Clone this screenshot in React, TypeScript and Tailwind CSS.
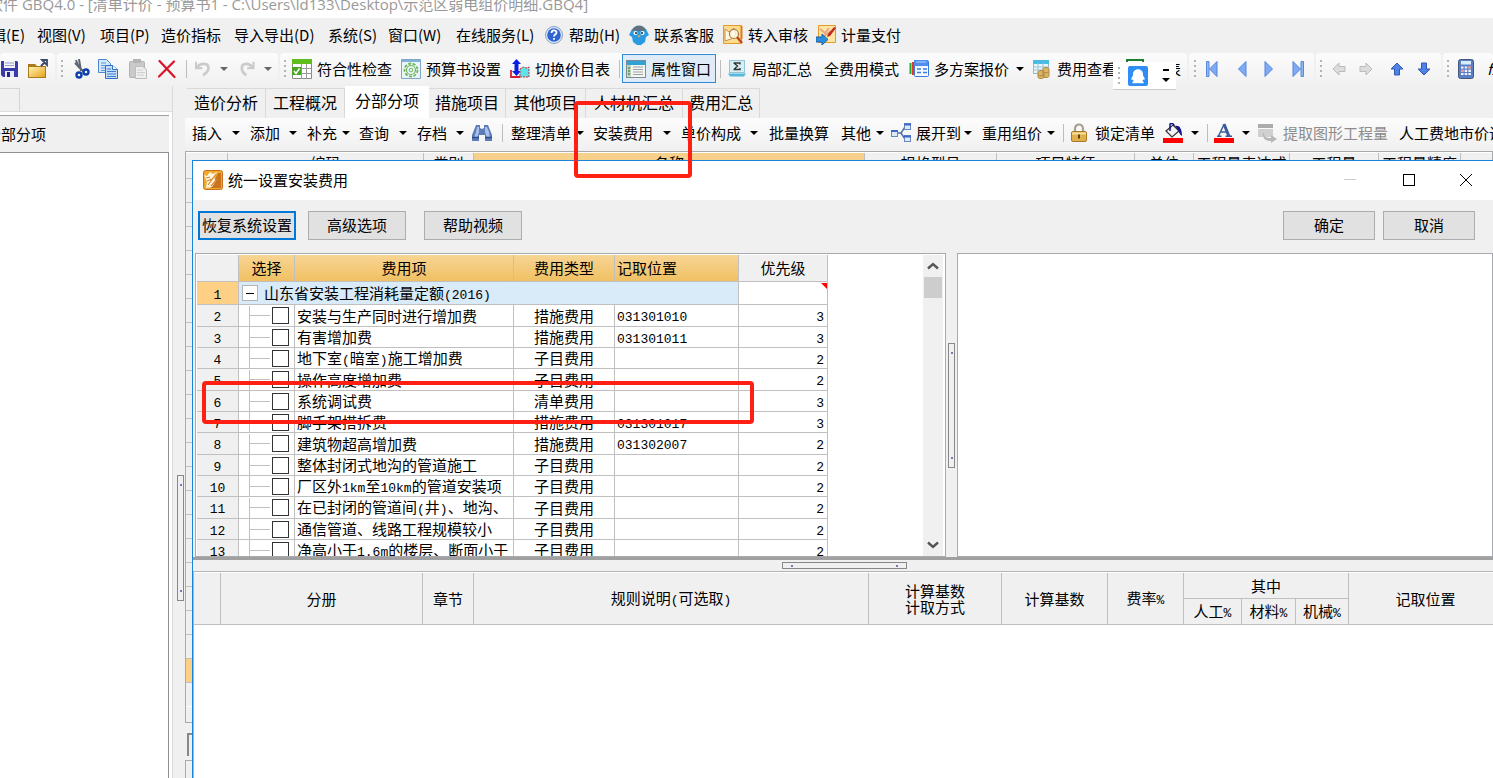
import React from 'react';
import type { ReactNode } from 'react';

/* ---------- text helpers ---------- */

function Mixed({ text }: { text: string }) {
  return (
    <>
      {text.split(/([\x20-\x7e]+)/).map((part, i) =>
        i % 2 === 1 ? (
          <span key={i} className="font-['Liberation_Mono',monospace] text-[13px] leading-none">
            {part}
          </span>
        ) : (
          part
        ),
      )}
    </>
  );
}

/* ---------- icons ---------- */

function Svg({ children, className = 'size-5' }: { children: ReactNode; className?: string }) {
  return (
    <svg viewBox="0 0 20 20" className={`shrink-0 ${className}`} fill="none" aria-hidden="true">
      {children}
    </svg>
  );
}

const SaveIcon = () => (
  <Svg>
    <path d="M1 2h16l1 1v15H3l-2-2z" fill="#3a3aa8" />
    <path d="M4 2h11v7H4z" fill="#f4f4fb" />
    <path d="M5 4h9M5 6.500h9" stroke="#9a9ac8" />
    <path d="M5 12h9v6H5z" fill="#e8e8f4" />
    <path d="M7 13h3v5H7z" fill="#25258a" />
  </Svg>
);
const FolderIcon = () => (
  <Svg>
    <path d="M0 5h7l2 2h9v12H0z" fill="#a87a1c" />
    <path d="M1 8h16v10H1z" fill="url(#folderFill)" />
    <path d="M13 7l4-4M14 1h5v5z" stroke="#3a4b66" strokeWidth="1.800" />
    <defs>
      <linearGradient id="folderFill" x1="0" y1="0" x2="1" y2="1">
        <stop stopColor="#fff1b0" />
        <stop offset="1" stopColor="#e9a320" />
      </linearGradient>
    </defs>
  </Svg>
);
const CutIcon = () => (
  <Svg>
    <path d="M2 4l9 9M6 0l2 12M3 1l3 8" stroke="#5d6672" strokeWidth="2" />
    <circle cx="6" cy="16" r="2.500" stroke="#0c3fae" strokeWidth="2.400" />
    <circle cx="13" cy="13" r="2.500" stroke="#0c3fae" strokeWidth="2.400" />
  </Svg>
);
const CopyIcon = () => (
  <Svg>
    <path d="M.500.500h8l4 4v9h-12z" fill="#d6e8fb" stroke="#4b86cf" />
    <path d="M3 4h5M3 6.500h7M3 9h7M3 11.500h5" stroke="#5d97dc" />
    <path d="M7.500 6.500h7l5 4v9h-12z" fill="#c5defa" stroke="#2f6fc4" />
    <path d="M14.500 6.500v4h5" fill="#fff" stroke="#2f6fc4" />
    <path d="M9 10h4M9 12.500h9M9 15h9M9 17.500h9" stroke="#3f7dd0" />
  </Svg>
);
const PasteIcon = () => (
  <Svg>
    <rect x="1.500" y="2.500" width="15" height="16" rx="1" fill="#c9c9c9" stroke="#b2b2b2" />
    <path d="M5 0h8v4H5z" fill="#b5b5b5" />
    <path d="M7.500 7.500h7l4 3v9h-11z" fill="#efefef" stroke="#bdbdbd" />
    <path d="M9 11h6M9 13.500h8M9 16h7" stroke="#cfcfcf" />
  </Svg>
);
const DeleteIcon = () => (
  <Svg>
    <path d="M1.500 2L16.500 18M16 2.500L1 17.500" stroke="#d8152b" strokeWidth="2.200" strokeLinecap="round" />
  </Svg>
);
const UndoIcon = () => (
  <Svg className="size-[18px]">
    <path d="M1 2v7h7" stroke="#cbcbcb" strokeWidth="2.400" />
    <path d="M2 8c4-5 13-5 13 1 0 4-3 6-6 8" stroke="#cbcbcb" strokeWidth="3" />
  </Svg>
);
const RedoIcon = () => (
  <Svg className="size-[18px]">
    <path d="M15 2v7H8" stroke="#cbcbcb" strokeWidth="2.400" />
    <path d="M14 8C10 3 2 3 2 9c0 4 2 6 5 8" stroke="#cbcbcb" strokeWidth="3" />
  </Svg>
);
const CheckTableIcon = () => (
  <Svg>
    <path d="M.500 4.500h19v15H.500z" fill="#fff" stroke="#888" />
    <path d="M0 0h20v5H0z" fill="#5fbe1c" />
    <path d="M1 9.500h19M1 14.500h19M9.500 5v15M14.500 5v15" stroke="#999" />
    <path d="M0 8h9v8H0z" fill="#4aa522" />
    <path d="M2 12l2 2.500L7.500 9.500" stroke="#fff" strokeWidth="1.500" />
  </Svg>
);
const GearIcon = () => (
  <Svg>
    <path d="M.500.500h19v19H.500z" fill="#eaf5fb" stroke="#7fa6c4" />
    <path d="M1 1h18v2H1z" fill="#7fb0de" />
    <circle cx="10" cy="11" r="6.500" stroke="#6fb657" strokeWidth="1.800" strokeDasharray="3 1.500" />
    <circle cx="10" cy="11" r="4.500" stroke="#6fb657" strokeWidth="1.200" />
    <circle cx="10" cy="11" r="1.800" stroke="#6fb657" />
  </Svg>
);
const SwitchIcon = () => (
  <Svg>
    <path d="M6.500 0L11 5H8.500v7H11l-4.500 5L2 12h2.500V5H2z" fill="#0a1ee0" />
    <path d="M1 11v7h9" stroke="#d3202e" strokeWidth="1.800" />
    <path d="M10 10l3-2 3 1 3-1v10h-9z" fill="#5fe2ea" stroke="#d3202e" strokeDasharray="2 1" />
  </Svg>
);
const PropsIcon = () => (
  <Svg>
    <rect x=".500" y="1.500" width="19" height="17" fill="#f7f7f2" stroke="#7f8b96" />
    <path d="M1 2h18v4H1z" fill="#2fa3d3" />
    <path d="M1 6h4v12H1z" fill="#c3d3c0" />
    <path d="M2 9h2M2 12h2M2 15h2" stroke="#3b9b3b" strokeWidth="1.500" />
    <path d="M7 8h10M7 10.500h10M7 13h10M7 15.500h10" stroke="#9aa0a5" />
  </Svg>
);
const SumIcon = () => (
  <Svg>
    <rect x="2.500" y="1.500" width="15" height="12" fill="#d8eef5" stroke="#93c5da" />
    <path d="M6.500 4h6.500v1.500M6.500 10.500h6.500V9M7 4l3.500 3L7 10.500" stroke="#333" strokeWidth="1.400" />
    <path d="M1 14.500h18l-2 3H3z" fill="#56b7d9" />
  </Svg>
);
const PlansIcon = () => (
  <Svg>
    <path d="M1.500 4v11" stroke="#1cae33" strokeWidth="2" />
    <path d="M4 3v13" stroke="#e33b28" strokeWidth="2" />
    <rect x="5.500" y="1.500" width="14" height="16" rx="1" fill="#f5f9ff" stroke="#3b78e0" />
    <path d="M5 1h14v6H5z" fill="#4f8df0" />
    <path d="M7 3h10" stroke="#b9d4fb" />
    <path d="M8 10h4M14 10h4M8 13.500h4M14 13.500h4" stroke="#3b78e0" strokeWidth="1.500" />
  </Svg>
);
const CoinsIcon = () => (
  <Svg>
    <rect x="1.500" y="1.500" width="15" height="13" fill="#e8f6fb" stroke="#8fbdd0" />
    <path d="M1 1h16v4H1z" fill="#45bde4" />
    <path d="M1 8h16M1 11h16M6 4v10M11 4v10" stroke="#9dc5d4" />
    <path d="M6 13c0-2 6-2 6 0v5c0 2-6 2-6 0zM11 10c0-2 6-2 6 0v7c0 2-6 2-6 0z" fill="#dcb467" stroke="#b08a42" />
    <path d="M11 13c2 1 4 1 6 0M6 16c2 1 4 1 6 0" stroke="#b08a42" />
  </Svg>
);
const HelpIcon = () => (
  <Svg>
    <circle cx="10" cy="10" r="8.500" fill="#dce9fb" stroke="#8aa0c2" />
    <circle cx="10" cy="10" r="6.800" fill="#2e63d0" />
    <path d="M7.500 8c0-3.500 5-3.500 5-.500 0 2-2.500 2-2.500 4M10 13v1.800" stroke="#fff" strokeWidth="1.800" />
  </Svg>
);
const SupportIcon = () => (
  <Svg>
    <path d="M3 4h14l3 6-3 2-1 5-4 3H8l-4-3-1-5-3-2z" fill="#2a9be0" />
    <path d="M3 5c2-6 12-6 14 0l-3 1H6z" fill="#5d7383" />
    <circle cx="6.500" cy="8" r="2" fill="#fff" />
    <circle cx="13.500" cy="8" r="2" fill="#fff" />
    <circle cx="7" cy="8" r="1" fill="#123" />
    <circle cx="13" cy="8" r="1" fill="#123" />
    <path d="M8 10.500h4l-2 2z" fill="#f2b13c" />
  </Svg>
);
const AuditIcon = () => (
  <Svg>
    <path d="M.500.500h18v18H.500z" fill="#fbdc8c" stroke="#e59a28" />
    <path d="M2 4l4 3 5-4 2 6-5 5-6 2z" fill="#fff6dc" stroke="#c98b53" />
    <circle cx="11" cy="9" r="4.500" fill="#fffbe8" fillOpacity=".8" stroke="#a47a4c" strokeWidth="1.200" />
    <path d="M14 12l5 6" stroke="#c5461c" strokeWidth="2.500" />
    <path d="M18.500 1v13" stroke="#e07a1c" strokeWidth="2" />
  </Svg>
);
const PayIcon = () => (
  <Svg>
    <path d="M2.500.500h17v17h-17z" fill="#fde6a4" stroke="#e59a28" />
    <path d="M4 4l5 4 4-5M8 11l7-5" stroke="#e8a884" strokeWidth="2" />
    <path d="M11 12l3-1 6-8-2-1-6 7z" fill="#c5281c" />
    <path d="M0 12h6V9l6 5.500L6 20v-3H0z" fill="#2a8fdc" stroke="#1d62aa" />
  </Svg>
);
const BinocularsIcon = () => (
  <Svg>
    <path d="M4 2h4v3l2 1 2-1V2h4l4 10v6h-7v-6H7v6H0v-6z" fill="#5c7dba" />
    <path d="M5 4h2v5l-2 6H2l2-6zM13 4h2l2 5 1 6h-3l-2-6z" fill="#a9c0e8" />
    <path d="M0 14.500h7M13 14.500h7" stroke="#2d4d88" strokeWidth="1.500" />
  </Svg>
);
const TreeIcon = () => (
  <Svg>
    <path d="M6 10h4l4-6M10 10l4 6" stroke="#4b6ea8" strokeWidth="1.500" />
    <rect x=".500" y="7.500" width="6" height="6" fill="#dfe9fa" stroke="#6888bd" />
    <rect x="13.500" y=".500" width="6" height="6" fill="#dfe9fa" stroke="#6888bd" />
    <rect x="13.500" y="12.500" width="6" height="6" fill="#dfe9fa" stroke="#6888bd" />
    <path d="M0 8h7M13 1.500h7M13 13.500h7" stroke="#3b68c4" strokeWidth="2" />
  </Svg>
);
const LockIcon = () => (
  <Svg>
    <path d="M5 9V6c0-6 8-6 8 0v3" stroke="#a7a08e" strokeWidth="2.200" />
    <rect x="1.500" y="8.500" width="15" height="10" rx="1.500" fill="#e2b04a" stroke="#a77a26" />
    <path d="M2 10.500h14" stroke="#f8df9c" strokeWidth="2" />
    <path d="M9 11.500v4" stroke="#5d4310" strokeWidth="2" />
  </Svg>
);
const FillIcon = () => (
  <Svg>
    <path d="M3 8l7-6 6 6-7 6z" fill="#f4f4f4" stroke="#333" strokeWidth="1.200" />
    <path d="M7 8V1c2-1.500 4 0 4 2" stroke="#14148a" strokeWidth="1.500" />
    <path d="M12 3c4-1 7 2 7 10-2-1-3-4-4-6z" fill="#14148a" />
    <path d="M0 15h20v5H0z" fill="#f00" />
  </Svg>
);
const FontColorIcon = () => (
  <Svg>
    <path d="M4.500 13L10 1.500M6 9h7M3 13.300h4.500M11.500 13.300H18" stroke="#3a5c9c" strokeWidth="1.500" />
    <path d="M10 1l5 12.500" stroke="#3a5c9c" strokeWidth="3" />
    <path d="M0 15h20v5H0z" fill="#f00" />
  </Svg>
);
const ExtractIcon = () => (
  <Svg>
    <path d="M0 1h15v4H0z" fill="#ababab" />
    <path d="M0 6h15v8H0z" fill="#d0d0d0" />
    <path d="M6 10c0 4 2 5 7 5v-3l6 4-6 4v-2c-6 0-8-2-8-8z" fill="#b8b8b8" />
  </Svg>
);
const CalcIcon = () => (
  <Svg>
    <rect x=".500" y=".500" width="15" height="19" rx="2" fill="#5a7fc6" stroke="#47577a" />
    <path d="M3 2h10v3.500H3z" fill="#d8ecfb" />
    <path d="M3 8.500h10M3 11.800h10M3 15h10" stroke="#f4f4ff" strokeWidth="2.200" strokeDasharray="2.500 1.200" />
    <path d="M10.500 8.500h2.500M3 11.800h2.500" stroke="#e88" strokeWidth="2" />
  </Svg>
);
const AppIcon = () => (
  <Svg>
    <rect x=".500" y=".500" width="19" height="19" rx="2" fill="#f0a92c" stroke="#c9701c" />
    <path d="M15 3h3v15H8z" fill="#c9741c" />
    <path d="M1 5l3 1 3-4 3 2 4-2-3 6 2 3-4 6-6 1 1-6z" fill="#fff6e2" />
    <path d="M3 8l4-1M4 11l5-2M5 15l8-11M8 16l6-7" stroke="#d8872c" strokeWidth="1.200" />
  </Svg>
);

function NavIcon({ flip = false, bar = false }: { flip?: boolean; bar?: boolean }) {
  return (
    <svg viewBox="0 0 12 18" className={`h-[18px] w-3 shrink-0 ${flip ? 'rotate-180' : ''}`} aria-hidden="true">
      {bar && <path d="M.500 1.500h2.500v15H.500z" fill="#8fb6f5" stroke="#5a89dc" />}
      <path d="M11 1.500v15L3.500 9z" fill="#7fabf5" stroke="#5583da" />
    </svg>
  );
}
function BlockArrow({ color, line, turn }: { color: string; line: string; turn: string }) {
  return (
    <svg viewBox="0 0 14 14" className={`size-3.5 shrink-0 ${turn}`} aria-hidden="true">
      <path d="M1 7l6-6v3.500h6v5H7V13z" fill={color} stroke={line} />
    </svg>
  );
}

/* ---------- tool bar parts ---------- */

const Grip = ({ w }: { w: string }) => (
  <span className={`flex shrink-0 flex-col gap-[3px] ${w}`}>
    {[0, 1, 2, 3].map((i) => (
      <i key={i} className="size-[2px] bg-[#b4b4b4]" />
    ))}
  </span>
);
const Sep = ({ w }: { w: string }) => (
  <span className={`flex h-[18px] shrink-0 ${w}`}>
    <i className="w-px bg-[#bcbcbc]" />
  </span>
);
const Caret = ({ color = 'border-t-black' }: { color?: string }) => (
  <i className={`size-0 shrink-0 border-x-4 border-t-4 border-x-transparent ${color}`} />
);

type ToolProps = { w: string; icon?: ReactNode; label?: string; tone?: string; title?: string };
function Tool({ w, icon, label, tone = 'text-black', title }: ToolProps) {
  return (
    <button
      type="button"
      aria-label={label ?? title}
      className={`flex shrink-0 items-center gap-[5px] text-left whitespace-nowrap ${tone} ${w}`}
    >
      {icon}
      {label}
    </button>
  );
}
function CaretTool({ w, title, color }: { w: string; title: string; color?: string }) {
  return (
    <button type="button" aria-label={title} className={`flex h-5 shrink-0 items-center ${w}`}>
      <Caret color={color} />
    </button>
  );
}

const barClass =
  'flex shrink-0 items-center overflow-hidden rounded-t bg-linear-to-b from-[#fcfcfc] to-[#f0f0f0] pb-[2px]';

function MenuBar() {
  return (
    <nav className="flex h-[35px] shrink-0 items-center overflow-hidden pb-[2px]">
      <Tool w="w-[61px] -ml-6" label="编辑(E)" />
      <Tool w="w-[63px]" label="视图(V)" />
      <Tool w="w-[61px]" label="项目(P)" />
      <Tool w="w-[73px]" label="造价指标" />
      <Tool w="w-[94px]" label="导入导出(D)" />
      <Tool w="w-[60px]" label="系统(S)" />
      <Tool w="w-[68px]" label="窗口(W)" />
      <Tool w="w-[88px]" label="在线服务(L)" />
      <Tool w="w-[85px]" icon={<HelpIcon />} label="帮助(H)" />
      <Tool w="w-[94px]" icon={<SupportIcon />} label="联系客服" />
      <Tool w="w-[93px]" icon={<AuditIcon />} label="转入审核" />
      <Tool w="w-[93px]" icon={<PayIcon />} label="计量支付" />
    </nav>
  );
}

function MainToolBar() {
  return (
    <div className="relative flex h-[33px] shrink-0 gap-[2px]">
      <div className={`${barClass} w-[55px]`}>
        <Tool w="w-7" icon={<SaveIcon />} title="保存" />
        <Tool w="w-6" icon={<FolderIcon />} title="打开" />
      </div>
      <div className={`${barClass} w-[221px] pl-1`}>
        <Grip w="w-3" />
        <Tool w="w-[25px]" icon={<CutIcon />} title="剪切" />
        <Tool w="w-[30px]" icon={<CopyIcon />} title="复制" />
        <Tool w="w-[30px]" icon={<PasteIcon />} title="粘贴" />
        <Tool w="w-7" icon={<DeleteIcon />} title="删除" />
        <Sep w="w-[9px]" />
        <Tool w="w-[25px]" icon={<UndoIcon />} title="撤销" />
        <CaretTool w="w-5" title="撤销列表" color="border-t-[#666]" />
        <Tool w="w-6" icon={<RedoIcon />} title="恢复" />
        <CaretTool w="w-3" title="恢复列表" color="border-t-[#666]" />
      </div>
      <div className={`${barClass} w-[907px] pl-1`}>
        <Grip w="w-2" />
        <Tool w="w-[109px]" icon={<CheckTableIcon />} label="符合性检查" />
        <Tool w="w-[109px]" icon={<GearIcon />} label="预算书设置" />
        <Tool w="w-[109px]" icon={<SwitchIcon />} label="切换价目表" />
        <Sep w="w-[3px]" />
        <Tool
          w="h-[29px] w-[94px] border border-[#2f8ad8] bg-[#dfebf6] pl-[3px]"
          icon={<PropsIcon />}
          label="属性窗口"
        />
        <Sep w="ml-1 w-[7px]" />
        <Tool w="w-[97px]" icon={<SumIcon />} label="局部汇总" />
        <Tool w="w-[85px]" label="全费用模式" />
        <Tool w="w-[107px]" icon={<PlansIcon />} label="多方案报价" />
        <CaretTool w="w-4" title="多方案列表" />
        <Tool w="w-[94px]" icon={<CoinsIcon />} label="费用查看" />
        <Tool
          w="w-[60px]"
          icon={
            <Svg>
              <path d="M1 1h16v18H1z" fill="#fff" stroke="#1d7d2c" strokeWidth="2" />
            </Svg>
          }
          label="报表"
        />
      </div>
      <div className={`${barClass} w-[125px] pl-[5px]`}>
        <Grip w="w-3" />
        <Tool w="w-[29px]" icon={<NavIcon bar />} title="首行" />
        <Tool w="w-[29px]" icon={<NavIcon />} title="上一行" />
        <Tool w="w-7" icon={<NavIcon flip />} title="下一行" />
        <Tool w="w-4" icon={<NavIcon flip bar />} title="末行" />
      </div>
      <div className={`${barClass} w-[125px] pl-1`}>
        <Grip w="w-3" />
        <Tool w="w-[27px]" icon={<BlockArrow color="#dcdcdc" line="#bbb" turn="" />} title="左移" />
        <Tool w="w-[31px]" icon={<BlockArrow color="#dcdcdc" line="#bbb" turn="rotate-180" />} title="右移" />
        <Tool w="w-[27px]" icon={<BlockArrow color="#4f82e6" line="#3059b4" turn="rotate-90" />} title="上移" />
        <Tool w="w-4" icon={<BlockArrow color="#4f82e6" line="#3059b4" turn="-rotate-90" />} title="下移" />
      </div>
      <div className={`${barClass} flex-1 pl-1`}>
        <Grip w="w-[11px]" />
        <Tool w="w-[29px]" icon={<CalcIcon />} title="计算器" />
        <span className="italic">fx</span>
      </div>

      <div className="absolute top-[9px] left-[1113px] flex h-7 w-[63px] items-center gap-2 overflow-hidden border-b border-[#ccc] bg-white pl-[5px]">
        <Grip w="w-[2px]" />
        <Svg>
          <rect width="20" height="20" rx="2" fill="#2f8ef4" />
          <path
            d="M5 9.500C4 1 16 1 15 9.500l1.500 2.500c.500 2-.500 2-1.500 1.500l-.500 1.500 1.500 1.500c0 1-4 1-6 .500-2 .500-6 .500-6-.500L5.500 15 5 13.500c-1 .500-2 .500-1.500-1.500z"
            fill="#fff"
          />
        </Svg>
        <span className="flex flex-col items-center gap-[7px] pl-1.5">
          <i className="h-[2px] w-1.5 bg-black" />
          <Caret />
        </span>
      </div>
    </div>
  );
}

function Tabs() {
  const tabs = [
    { label: '造价分析', w: 'w-[79px]' },
    { label: '工程概况', w: 'w-[79px]' },
    { label: '分部分项', w: 'w-[84px]' },
    { label: '措施项目', w: 'w-[77px]' },
    { label: '其他项目', w: 'w-[80px]' },
    { label: '人材机汇总', w: 'w-[97px]' },
    { label: '费用汇总', w: 'w-[77px]' },
  ];
  return (
    <div role="tablist" className="flex h-8 shrink-0 items-end pl-[2px] text-base">
      {tabs.map((t, i) => (
        <button
          key={t.label}
          type="button"
          role="tab"
          aria-selected={i === 2}
          className={
            i === 2
              ? `h-8 shrink-0 bg-white pb-[5px] ${t.w}`
              : `h-[30px] shrink-0 border-t border-r border-[#d9d9d9] pb-[3px] whitespace-nowrap ${t.w}`
          }
        >
          {t.label}
        </button>
      ))}
    </div>
  );
}

function EditToolBar() {
  return (
    <div className="flex h-[33px] shrink-0 items-center overflow-hidden bg-linear-to-b from-[#fcfcfc] to-[#f0f0f0] pb-[3px] pl-[7px]">
      <Tool w="w-10" label="插入" />
      <CaretTool w="w-[18px]" title="插入选项" />
      <Tool w="w-[39px]" label="添加" />
      <CaretTool w="w-[18px]" title="添加选项" />
      <Tool w="w-[35px]" label="补充" />
      <CaretTool w="w-[17px]" title="补充选项" />
      <Tool w="w-10" label="查询" />
      <CaretTool w="w-[18px]" title="查询选项" />
      <Tool w="w-[39px]" label="存档" />
      <CaretTool w="w-4" title="存档选项" />
      <Tool w="w-[30px]" icon={<BinocularsIcon />} title="查找" />
      <Sep w="w-[9px]" />
      <Tool w="w-[65px]" label="整理清单" />
      <CaretTool w="w-[17px]" title="整理清单选项" />
      <Tool w="w-[70px]" label="安装费用" />
      <CaretTool w="w-[18px]" title="安装费用选项" />
      <Tool w="w-[69px]" label="单价构成" />
      <CaretTool w="w-[19px]" title="单价构成选项" />
      <Tool w="w-[72px]" label="批量换算" />
      <Tool w="w-[35px]" label="其他" />
      <CaretTool w="w-[15px]" title="其他选项" />
      <Tool w="w-[73px]" icon={<TreeIcon />} label="展开到" />
      <CaretTool w="w-[18px]" title="展开选项" />
      <Tool w="w-[65px]" label="重用组价" />
      <CaretTool w="w-4" title="重用组价选项" />
      <Sep w="w-[7px]" />
      <Tool w="w-[93px]" icon={<LockIcon />} label="锁定清单" />
      <Tool w="w-7" icon={<FillIcon />} title="填充颜色" />
      <CaretTool w="w-4" title="填充颜色选项" />
      <Sep w="w-[7px]" />
      <Tool w="w-7" icon={<FontColorIcon />} title="字体颜色" />
      <CaretTool w="w-4" title="字体颜色选项" />
      <Tool w="w-[141px]" icon={<ExtractIcon />} label="提取图形工程量" tone="text-[#8c8c8c]" />
      <Tool w="w-[120px]" label="人工费地市价调整" />
    </div>
  );
}

/* ---------- grid behind the dialog ---------- */

function BackgroundGrid() {
  const heads = [
    { label: '', w: 'w-[42px]' },
    { label: '编码', w: 'w-[196px]' },
    { label: '类别', w: 'w-[50px]' },
    { label: '名称', w: 'w-[391px] bg-[#f7d08c]' },
    { label: '规格型号', w: 'w-[132px]' },
    { label: '项目特征', w: 'w-[138px]' },
    { label: '单位', w: 'w-[59px]' },
    { label: '工程量表达式', w: 'w-[96px]' },
    { label: '工程量', w: 'w-[89px]' },
    { label: '工程量精度', w: 'w-[82px]' },
    { label: '', w: 'w-[60px]' },
  ];
  return (
    <div className="flex h-[572px] shrink-0 flex-col overflow-hidden border border-[#a9a9b0]">
      <div className="flex h-[27px] shrink-0 border-t border-b border-t-white border-b-[#c0c0c0]">
        {heads.map((h, i) => (
          <span
            key={i}
            className={`shrink-0 border-r border-[#c0c0c0] text-center leading-5 whitespace-nowrap ${h.w}`}
          >
            {h.label}
          </span>
        ))}
      </div>
      {Array.from({ length: 22 }, (_, i) => (
        <div
          key={i}
          className={`h-6 shrink-0 border-b ${
            i === 20 ? 'border-[#c0c0c0] bg-[#fdd086]' : i === 21 ? 'border-white' : 'border-[#c0c0c0]'
          }`}
        />
      ))}
    </div>
  );
}

/* ---------- dialog ---------- */

type FeeRow = [name: string, kind: string, place: string, priority: number];
const feeRows: FeeRow[] = [
  ['安装与生产同时进行增加费', '措施费用', '031301010', 3],
  ['有害增加费', '措施费用', '031301011', 3],
  ['地下室(暗室)施工增加费', '子目费用', '', 2],
  ['操作高度增加费', '子目费用', '', 2],
  ['系统调试费', '清单费用', '', 3],
  ['脚手架搭拆费', '措施费用', '031301017', 3],
  ['建筑物超高增加费', '措施费用', '031302007', 2],
  ['整体封闭式地沟的管道施工', '子目费用', '', 2],
  ['厂区外1km至10km的管道安装项', '子目费用', '', 2],
  ['在已封闭的管道间(井)、地沟、', '子目费用', '', 2],
  ['通信管道、线路工程规模较小', '子目费用', '', 2],
  ['净高小于1.6m的楼层、断面小于', '子目费用', '', 2],
];

const cell = 'border-r border-b border-[#c0c0c0] p-0';
const goldHead = `${cell} bg-linear-to-b from-[#f8d594] to-[#f0c062] font-normal`;

function FeeTable() {
  return (
    <table className="w-[631px] shrink-0 table-fixed border-separate border-spacing-0 self-start leading-4">
      <colgroup>
        <col className="w-[42px]" />
        <col className="w-[56px]" />
        <col className="w-[219px]" />
        <col className="w-[101px]" />
        <col className="w-[124px]" />
        <col className="w-[89px]" />
      </colgroup>
      <thead>
        <tr className="h-[27px]">
          <th className={`${cell} bg-[#f0f0f0]`} />
          <th className={goldHead}>选择</th>
          <th className={goldHead}>费用项</th>
          <th className={goldHead}>费用类型</th>
          <th className={`${goldHead} pl-[2px] text-left`}>记取位置</th>
          <th className={`${cell} bg-[#f0f0f0] font-normal`}>优先级</th>
        </tr>
      </thead>
      <tbody>
        <tr className="h-[23px]">
          <td className={`${cell} bg-[#fdd086] text-center`}>
            <Mixed text="1" />
          </td>
          <td colSpan={4} className={`${cell} bg-[#d9eaf8]`}>
            <div className="flex items-center gap-[6px] pl-[3px]">
              <button
                type="button"
                aria-label="折叠"
                className="flex size-4 items-center justify-center border border-[#b4b4b4] bg-white"
              >
                <i className="h-px w-2 bg-black" />
              </button>
              <span>
                <Mixed text="山东省安装工程消耗量定额(2016)" />
              </span>
            </div>
          </td>
          <td className={cell}>
            <i className="ml-auto block h-5 w-1.5">
              <svg viewBox="0 0 6 6" className="size-1.5" aria-hidden="true">
                <path d="M0 0h6v6z" fill="#f00" />
              </svg>
            </i>
          </td>
        </tr>
        {feeRows.map(([name, kind, place, priority], i) => (
          <tr key={name} className={i % 3 === 0 ? 'h-[22px]' : 'h-[21px]'}>
            <td className={`${cell} bg-[#f0f0f0] text-center`}>
              <Mixed text={String(i + 2)} />
            </td>
            <td className={cell}>
              <div className="flex h-5 items-center pl-[10px]">
                <i className="h-full w-px bg-[#c0c0c0]" />
                <i className="h-px w-5 bg-[#c0c0c0]" />
                <input
                  type="checkbox"
                  aria-label={name}
                  className="ml-[2px] size-[17px] shrink-0 appearance-none border border-[#333] bg-white checked:bg-[#333]"
                />
              </div>
            </td>
            <td className={`${cell} overflow-hidden pl-[2px] whitespace-nowrap`}>
              <Mixed text={name} />
            </td>
            <td className={`${cell} text-center`}>{kind}</td>
            <td className={`${cell} pl-[2px]`}>
              <Mixed text={place} />
            </td>
            <td className={`${cell} pr-[3px] text-right`}>
              <Mixed text={String(priority)} />
            </td>
          </tr>
        ))}
      </tbody>
    </table>
  );
}

function RuleTable() {
  const head = 'border-r border-b border-[#c0c0c0] p-0 font-normal';
  return (
    <table className="w-[1309px] table-fixed border-separate border-spacing-0 bg-[#f0f0f0] leading-4">
      <colgroup>
        <col className="w-[27px]" />
        <col className="w-[202px]" />
        <col className="w-[51px]" />
        <col className="w-[395px]" />
        <col className="w-[133px]" />
        <col className="w-[106px]" />
        <col className="w-[76px]" />
        <col className="w-[58px]" />
        <col className="w-[54px]" />
        <col className="w-[53px]" />
        <col className="w-[154px]" />
      </colgroup>
      <thead>
        <tr className="h-[26px]">
          <th rowSpan={2} className={head} />
          <th rowSpan={2} className={head}>分册</th>
          <th rowSpan={2} className={head}>章节</th>
          <th rowSpan={2} className={head}>
            <Mixed text="规则说明(可选取)" />
          </th>
          <th rowSpan={2} className={head}>
            计算基数
            <br />
            计取方式
          </th>
          <th rowSpan={2} className={head}>计算基数</th>
          <th rowSpan={2} className={head}>
            <Mixed text="费率%" />
          </th>
          <th colSpan={3} className={head}>其中</th>
          <th rowSpan={2} className={head}>记取位置</th>
        </tr>
        <tr className="h-[26px]">
          <th className={head}>
            <Mixed text="人工%" />
          </th>
          <th className={head}>
            <Mixed text="材料%" />
          </th>
          <th className={head}>
            <Mixed text="机械%" />
          </th>
        </tr>
      </thead>
    </table>
  );
}

const Chevron = ({ d }: { d: string }) => (
  <svg viewBox="0 0 12 8" className="h-2 w-3" fill="none" aria-hidden="true">
    <path d={d} stroke="#555" strokeWidth="2.400" />
  </svg>
);

function Dialog() {
  const plain = 'h-[29px] shrink-0 border border-[#adadad] bg-[#e1e1e1] pb-px leading-5';
  return (
    <section
      role="dialog"
      aria-label="统一设置安装费用"
      className="absolute top-[160px] right-0 bottom-0 left-[192px] flex flex-col overflow-hidden border-t border-l border-[#1883d7] bg-[#f0f0f0]"
    >
      <header className="flex h-[39px] shrink-0 items-center bg-white pb-[2px] pl-[10px]">
        <AppIcon />
        <h1 className="ml-[5px] flex-1">统一设置安装费用</h1>
        <button type="button" aria-label="最小化" className="flex h-full w-[58px] items-center justify-center">
          <i className="h-px w-3 bg-[#ccc]" />
        </button>
        <button type="button" aria-label="最大化" className="flex h-full w-[59px] items-center justify-center">
          <i className="size-3 border border-black" />
        </button>
        <button type="button" aria-label="关闭" className="flex h-full w-[55px] items-center justify-center">
          <svg viewBox="0 0 12 12" className="size-3" aria-hidden="true">
            <path d="M0 0l12 12M12 0L0 12" stroke="#000" />
          </svg>
        </button>
      </header>

      <div className="flex h-[53px] shrink-0 items-center pr-[18px] pb-[2px] pl-[5px]">
        <button
          type="button"
          className="mr-3 h-[29px] w-[98px] shrink-0 border-2 border-[#0078d7] bg-[#e1e1e1] pb-px leading-5 whitespace-nowrap"
        >
          恢复系统设置
        </button>
        <button type="button" className={`${plain} mr-[18px] w-[98px]`}>高级选项</button>
        <button type="button" className={`${plain} w-[98px]`}>帮助视频</button>
        <span className="flex-1" />
        <button type="button" className={`${plain} mr-2 w-[92px]`}>确定</button>
        <button type="button" className={`${plain} w-[92px]`}>取消</button>
      </div>

      <div className="flex h-[304px] shrink-0 pl-[2px]">
        <div className="flex w-[751px] shrink-0 overflow-hidden border border-[#a9a9b0] bg-white pt-px pl-px">
          <FeeTable />
          <span className="flex-1" />
          <div className="mr-[2px] flex w-5 flex-col items-center bg-[#f0f0f0] py-[7px]">
            <Chevron d="M1 6.500L6 2l5 4.500" />
            <i className="mt-[7px] h-[21px] w-[18px] bg-[#cdcdcd]" />
            <span className="flex-1" />
            <Chevron d="M1 1.500L6 6l5-4.500" />
          </div>
        </div>
        <div className="flex w-[11px] shrink-0 items-center justify-center">
          <div className="flex h-[125px] w-[7px] flex-col items-center justify-between border border-[#888] py-2">
            <i className="size-[2px] bg-[#7777bb]" />
            <i className="size-[2px] bg-[#7777bb]" />
          </div>
        </div>
        <div className="flex-1 border border-[#a9a9b0] bg-white" />
      </div>
      <div className="h-[3px] shrink-0 bg-[#a0a0a0]" />
      <div className="flex h-[11px] shrink-0 items-center pl-[589px]">
        <div className="flex h-[7px] w-[125px] items-center justify-between border border-[#888] px-2">
          <i className="size-[2px] bg-[#7777bb]" />
          <i className="size-[2px] bg-[#7777bb]" />
        </div>
      </div>
      <div className="flex-1 overflow-hidden border-t border-l border-[#b4b4b4] bg-white pt-px">
        <RuleTable />
      </div>
    </section>
  );
}

/* ---------- page ---------- */

export default function App() {
  return (
    <div className="relative flex h-screen flex-col overflow-hidden bg-[#f0f0f0] font-['Noto_Sans_CJK_SC','Noto_Sans',sans-serif] text-[15px] leading-5 text-black">
      <div className="flex h-[18px] shrink-0 items-end overflow-hidden bg-white pb-1 font-['Open_Sans','Noto_Sans_CJK_SC',sans-serif]">
        <p className="-ml-3 whitespace-nowrap text-[#999]">
          {'软件 GBQ4.0 - [清单计价 - 预算书1 - C:\\Users\\ld133\\Desktop\\示范区弱电组价明细.GBQ4]'}
        </p>
      </div>
      <MenuBar />
      <MainToolBar />

      <div className="flex min-h-0 flex-1">
        <aside className="flex w-[173px] shrink-0 flex-col border-r border-[#d9d9d9] pt-[2px]">
          <div className="h-[23px] w-5 shrink-0 border-t border-r border-[#d4d4d4]" />
          <div className="flex min-h-0 flex-1 flex-col border-t border-[#dcdcdc] bg-white pt-[3px] pr-[3px]">
            <div className="flex h-[37px] shrink-0 items-center overflow-hidden border-t border-[#a0a0a0] bg-[#f0f0f0]">
              <span className="-ml-3.5">分部分项</span>
            </div>
            <div className="flex-1 border-t border-r border-[#8e8f94] bg-white" />
          </div>
        </aside>
        <div className="flex w-3 shrink-0 pt-[389px] pl-1">
          <div className="flex h-[126px] w-[7px] flex-col items-center justify-between border border-[#888] py-2">
            <i className="size-[2px] bg-[#7777bb]" />
            <i className="size-[2px] bg-[#7777bb]" />
          </div>
        </div>
        <main className="flex min-w-0 flex-1 flex-col overflow-hidden">
          <Tabs />
          <EditToolBar />
          <BackgroundGrid />
          <div className="mt-2.5 ml-[2px] h-[23px] shrink-0 border-2 border-r-0 border-b-0 border-[#888]" />
          <div className="mt-1 flex-1 border-t border-l border-[#a9a9b0]" />
        </main>
      </div>

      <Dialog />
      <div className="pointer-events-none absolute top-[101px] left-[574px] h-[77px] w-[118px] rounded border-4 border-[#ff2013]" />
      <div className="pointer-events-none absolute top-[381px] left-[202px] h-[43px] w-[552px] rounded border-4 border-[#ff2013]" />
    </div>
  );
}
